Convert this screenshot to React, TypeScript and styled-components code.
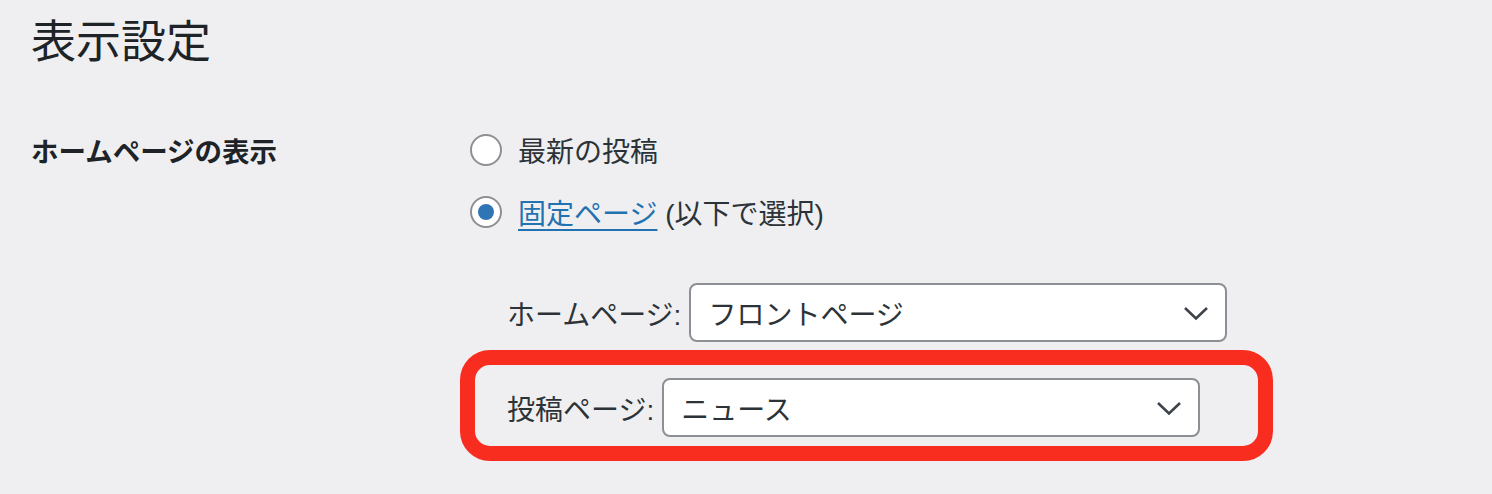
import React from "react";
import styled, { createGlobalStyle } from "styled-components";

const Global = createGlobalStyle`
  html, body {
    margin: 0;
    padding: 0;
    background: #efeff1;
  }
  body {
    font-family: "Liberation Sans", "Noto Sans CJK JP", sans-serif;
    color: #1d2327;
  }
`;

const Page = styled.div`
  padding: 9px 32px 0 31px;
  width: 1492px;
  height: 494px;
  box-sizing: border-box;
  overflow: hidden;
`;

const Title = styled.h1`
  margin: 0;
  font-family: "Noto Sans CJK JP", sans-serif;
  font-size: 45px;
  font-weight: 400;
  line-height: 60px;
  color: #1d2327;
`;

const FormGrid = styled.div`
  display: grid;
  grid-template-columns: 429px 1fr;
  margin-top: 50px;
`;

const RowLabel = styled.div`
  font-family: "Noto Sans CJK JP", sans-serif;
  font-size: 27.5px;
  font-weight: 700;
  line-height: 62px;
  color: #1d2327;
`;

const Field = styled.div`
  display: flex;
  flex-direction: column;
`;

const RadioRow = styled.label`
  display: flex;
  align-items: center;
  gap: 16px;
  height: 62px;
  margin-left: 10px;
  font-size: 28px;
  color: #2c3338;
`;

const RadioCircle = styled.span<{ $checked?: boolean }>`
  width: 32px;
  height: 32px;
  box-sizing: border-box;
  border: 2px solid #8c8f94;
  border-radius: 50%;
  background: #fff;
  display: flex;
  align-items: center;
  justify-content: center;
  flex-shrink: 0;
  &::after {
    content: "";
    display: ${(p) => (p.$checked ? "block" : "none")};
    width: 16px;
    height: 16px;
    border-radius: 50%;
    background: #2f75b6;
  }
`;

const Link = styled.a`
  color: #2271b1;
  text-decoration: underline;
  text-underline-offset: 5px;
  text-decoration-thickness: 2px;
`;

const SelectRow = styled.div<{ $indent: number }>`
  display: flex;
  align-items: center;
  gap: 8px;
  padding-left: ${(p) => p.$indent}px;
  font-size: 28px;
  color: #2c3338;
`;

const Highlight = styled.div`
  margin-top: 8px;
  width: 813px;
  height: 111px;
  box-sizing: border-box;
  border: 15px solid #f92d1f;
  border-radius: 30px;
  padding: 13px 0 0 32px;
`;

const SelectBox = styled.div`
  position: relative;
  width: 538px;
  height: 59px;
  box-sizing: border-box;
  border: 2px solid #8c8f94;
  border-radius: 8px;
  background: #fff;
  display: flex;
  align-items: center;
  padding-left: 17px;
  font-size: 28px;
  color: #2c3338;
`;

const Chevron = styled.svg`
  position: absolute;
  right: 16px;
  top: 50%;
  margin-top: -7px;
`;

const FirstSelectRow = styled(SelectRow)`
  margin-top: 40px;
`;

function Select({ value }: { value: string }) {
  return (
    <SelectBox>
      {value}
      <Chevron width="26" height="15" viewBox="0 0 26 15">
        <path d="M2 2 L13 12.5 L24 2" fill="none" stroke="#3c434a" strokeWidth="2.6" />
      </Chevron>
    </SelectBox>
  );
}

export default function App() {
  return (
    <>
      <Global />
      <Page>
        <Title>表示設定</Title>
        <FormGrid>
          <RowLabel>ホームページの表示</RowLabel>
          <Field>
            <RadioRow>
              <RadioCircle />
              最新の投稿
            </RadioRow>
            <RadioRow>
              <RadioCircle $checked />
              <span>
                <Link href="#">固定ページ</Link> (以下で選択)
              </span>
            </RadioRow>
            <FirstSelectRow $indent={47}>
              ホームページ:
              <Select value="フロントページ" />
            </FirstSelectRow>
            <Highlight>
              <SelectRow $indent={0}>
                投稿ページ:
                <Select value="ニュース" />
              </SelectRow>
            </Highlight>
          </Field>
        </FormGrid>
      </Page>
    </>
  );
}
